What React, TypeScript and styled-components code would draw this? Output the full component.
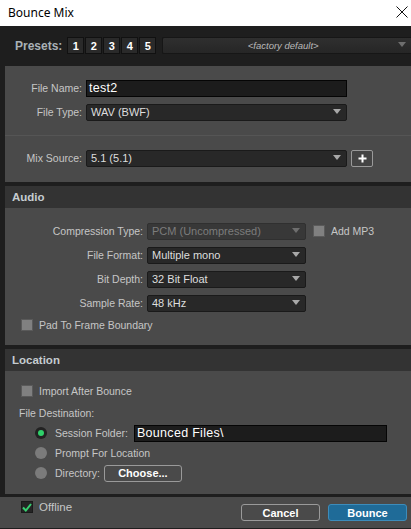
import * as React from "react";
import styled, { createGlobalStyle } from "styled-components";

const GlobalStyle = createGlobalStyle`
  html, body {
    margin: 0;
    padding: 0;
    background: #1e1e1e;
  }
  * {
    box-sizing: border-box;
  }
`;

const Window = styled.div`
  width: 411px;
  height: 529px;
  overflow: hidden;
  display: flex;
  flex-direction: column;
  background: #1e1e1e;
  font-family: "Liberation Sans", Arial, sans-serif;
  font-size: 10.5px;
  color: #c6c6c6;
`;

const TitleBar = styled.div`
  height: 26px;
  flex: none;
  display: flex;
  align-items: center;
  justify-content: space-between;
  padding: 0 2px 2px 8px;
  background: #ffffff;
  color: #000;
  font-family: "Noto Sans", "Open Sans", sans-serif;
  font-size: 12px;
`;

const CloseButton = styled.div`
  width: 14px;
  height: 14px;
  display: flex;
  align-items: center;
  justify-content: center;
`;

const Body = styled.div`
  flex: none;
  display: flex;
  flex-direction: column;
  padding-left: 5px;
`;

const PresetBar = styled.div`
  height: 40px;
  flex: none;
  display: flex;
  align-items: center;
  padding: 0 0 1px 10px;
`;

const PresetLabel = styled.span`
  font-size: 12px;
  font-weight: bold;
  color: #a9b1b6;
  margin-right: 5px;
`;

const PresetSlots = styled.div`
  display: flex;
  gap: 1px;
  margin-right: 6px;
`;

const PresetSlot = styled.div`
  width: 17px;
  height: 17px;
  display: flex;
  align-items: center;
  justify-content: center;
  background: #2a2a2a;
  border: 1px solid #111;
  color: #fff;
  font-weight: bold;
  font-size: 11px;
`;

const PresetMenu = styled.div`
  flex: 1;
  height: 17px;
  position: relative;
  display: flex;
  align-items: center;
  justify-content: center;
  background: linear-gradient(#2f2f2f, #262626);
  border: 1px solid #161616;
  border-right: none;
  border-radius: 2px 0 0 2px;
  color: #b9b9b9;
  font-style: italic;
  font-size: 9.5px;
  padding-right: 8px;
`;

const Panel = styled.div`
  background: #4a4a4a;
  display: flex;
  flex-direction: column;
`;

const FilePanel = styled(Panel)`
  height: 116px;
  flex: none;
`;

const Block = styled.div<{ $pad: string; $gap?: number }>`
  display: flex;
  flex-direction: column;
  gap: ${(p) => p.$gap ?? 0}px;
  padding: ${(p) => p.$pad};
`;

const Divider = styled.div`
  height: 1px;
  background: #333;
  border-bottom: 1px solid #555;
`;

const Row = styled.div<{ $h?: number }>`
  display: flex;
  align-items: center;
  height: ${(p) => p.$h ?? 18}px;
`;

const Label = styled.span<{ $w: number }>`
  width: ${(p) => p.$w}px;
  flex: none;
  text-align: right;
  white-space: nowrap;
  margin-right: 4px;
`;

const TextInput = styled.div<{ $w: number }>`
  width: ${(p) => p.$w}px;
  height: 17px;
  display: flex;
  align-items: center;
  padding-left: 2px;
  background: #1c1c1c;
  border: 1px solid #050505;
  color: #fff;
  font-size: 12.5px;
  letter-spacing: 0.3px;
`;

const Select = styled.div<{ $w: number; $disabled?: boolean }>`
  width: ${(p) => p.$w}px;
  height: 17px;
  position: relative;
  display: flex;
  align-items: center;
  padding-left: 4px;
  background: ${(p) => (p.$disabled ? "#383838" : "#282828")};
  border: 1px solid ${(p) => (p.$disabled ? "#303030" : "#1a1a1a")};
  border-radius: 2px;
  color: ${(p) => (p.$disabled ? "#7c7c7c" : "#dedede")};
  font-size: 11px;
`;

const Arrow = styled.span<{ $dim?: boolean }>`
  position: absolute;
  right: 5px;
  top: 4px;
  width: 0;
  height: 0;
  border-left: 4px solid transparent;
  border-right: 4px solid transparent;
  border-top: 5px solid ${(p) => (p.$dim ? "#6e6e6e" : "#a8a8a8")};
`;

const PlusButton = styled.div`
  width: 22px;
  height: 17px;
  margin-left: 4px;
  display: flex;
  align-items: center;
  justify-content: center;
  border: 1px solid #9a9a9a;
  border-radius: 2px;
  background: #444;
`;

const Section = styled.div<{ $h: number }>`
  flex: none;
  height: ${(p) => p.$h}px;
  margin-top: 4px;
  display: flex;
  flex-direction: column;
`;

const SectionHeader = styled.div`
  height: 22px;
  flex: none;
  display: flex;
  align-items: center;
  padding-left: 7px;
  background: #333333;
  color: #c5ccd0;
  font-weight: bold;
  font-size: 11.5px;
`;

const SectionBody = styled(Panel)`
  flex: 1;
`;

const Check = styled.span<{ $on?: boolean }>`
  width: 12px;
  height: 12px;
  flex: none;
  display: flex;
  align-items: center;
  justify-content: center;
  background: ${(p) => (p.$on ? "#242424" : "#808080")};
  border: 1px solid ${(p) => (p.$on ? "#1a1a1a" : "#5a5a5a")};
  margin-right: 6px;
`;

const Radio = styled.span<{ $on?: boolean }>`
  width: 12px;
  height: 12px;
  flex: none;
  border-radius: 50%;
  display: flex;
  align-items: center;
  justify-content: center;
  background: ${(p) => (p.$on ? "#222" : "#7b7b7b")};
  margin-right: 8px;

  &::after {
    content: "";
    display: ${(p) => (p.$on ? "block" : "none")};
    width: 6px;
    height: 6px;
    border-radius: 50%;
    background: #2fd06a;
  }
`;

const Indent = styled.div<{ $left: number }>`
  display: flex;
  flex-direction: column;
  padding-left: ${(p) => p.$left}px;
`;

const GhostButton = styled.div<{ $w: number; $primary?: boolean }>`
  width: ${(p) => p.$w}px;
  height: 17px;
  display: flex;
  align-items: center;
  justify-content: center;
  border: 1px solid ${(p) => (p.$primary ? "#3c8cbb" : "#9a9a9a")};
  border-radius: 3px;
  background: ${(p) => (p.$primary ? "#1f6b98" : "#4a4a4a")};
  color: #fff;
  font-weight: bold;
  font-size: 11px;
`;

const Footer = styled.div`
  height: 31px;
  flex: none;
  margin-top: 3px;
  display: flex;
  align-items: flex-start;
  padding: 0 4px 0 21px;
  background: #4a4a4a;
`;

const FooterButtons = styled.div`
  margin-left: auto;
  display: flex;
  gap: 8px;
  padding-top: 7px;
`;

const OfflineRow = styled.div`
  display: flex;
  align-items: center;
  padding-top: 4px;
`;

function Dropdown({ w, value, disabled }: { w: number; value: string; disabled?: boolean }) {
  return (
    <Select $w={w} $disabled={disabled}>
      {value}
      <Arrow $dim={disabled} />
    </Select>
  );
}

export default function App() {
  return (
    <Window>
      <GlobalStyle />
      <TitleBar>
        <span>Bounce Mix</span>
        <CloseButton>
          <svg width="12" height="12" viewBox="0 0 12 12">
            <path d="M0.5 0.5 L11.5 11.5 M11.5 0.5 L0.5 11.5" stroke="#111" strokeWidth="1" />
          </svg>
        </CloseButton>
      </TitleBar>

      <Body>
        <PresetBar>
          <PresetLabel>Presets:</PresetLabel>
          <PresetSlots>
            {[1, 2, 3, 4, 5].map((n) => (
              <PresetSlot key={n}>{n}</PresetSlot>
            ))}
          </PresetSlots>
          <PresetMenu>
            &lt;factory default&gt;
            <Arrow $dim />
          </PresetMenu>
        </PresetBar>

        <FilePanel>
          <Block $pad="13px 0 14px 0" $gap={6}>
            <Row>
              <Label $w={77}>File Name:</Label>
              <TextInput $w={261}>test2</TextInput>
            </Row>
            <Row>
              <Label $w={77}>File Type:</Label>
              <Dropdown w={261} value="WAV (BWF)" />
            </Row>
          </Block>
          <Divider />
          <Block $pad="13px 0 0 0">
            <Row>
              <Label $w={77}>Mix Source:</Label>
              <Dropdown w={261} value="5.1 (5.1)" />
              <PlusButton>
                <svg width="9" height="9" viewBox="0 0 9 9">
                  <path d="M4.5 0.5 V8.5 M0.5 4.5 H8.5" stroke="#fff" strokeWidth="2" />
                </svg>
              </PlusButton>
            </Row>
          </Block>
        </FilePanel>

        <Section $h={159}>
          <SectionHeader>Audio</SectionHeader>
          <SectionBody>
            <Block $pad="14px 0 0 0" $gap={6}>
              <Row>
                <Label $w={138}>Compression Type:</Label>
                <Dropdown w={159} value="PCM (Uncompressed)" disabled />
                <span style={{ width: 7 }} />
                <Check />
                <span>Add MP3</span>
              </Row>
              <Row>
                <Label $w={138}>File Format:</Label>
                <Dropdown w={159} value="Multiple mono" />
              </Row>
              <Row>
                <Label $w={138}>Bit Depth:</Label>
                <Dropdown w={159} value="32 Bit Float" />
              </Row>
              <Row>
                <Label $w={138}>Sample Rate:</Label>
                <Dropdown w={159} value="48 kHz" />
              </Row>
              <Indent $left={16}>
                <Row $h={14}>
                  <Check />
                  <span>Pad To Frame Boundary</span>
                </Row>
              </Indent>
            </Block>
          </SectionBody>
        </Section>

        <Section $h={145}>
          <SectionHeader>Location</SectionHeader>
          <SectionBody>
            <Block $pad="12px 0 0 16px">
              <Row $h={16}>
                <Check />
                <span>Import After Bounce</span>
              </Row>
              <Row $h={16} style={{ marginTop: 6, marginLeft: -2 }}>
                File Destination:
              </Row>
              <Indent $left={14}>
                <Row style={{ marginTop: 3 }}>
                  <Radio $on />
                  <span style={{ marginRight: 6 }}>Session Folder:</span>
                  <TextInput $w={253}>Bounced Files\</TextInput>
                </Row>
                <Row style={{ marginTop: 2 }}>
                  <Radio />
                  <span>Prompt For Location</span>
                </Row>
                <Row style={{ marginTop: 2 }}>
                  <Radio />
                  <span style={{ marginRight: 4 }}>Directory:</span>
                  <GhostButton $w={78}>Choose...</GhostButton>
                </Row>
              </Indent>
            </Block>
          </SectionBody>
        </Section>
      </Body>

      <Footer>
        <OfflineRow>
          <Check $on>
            <svg width="10" height="9" viewBox="0 0 10 9">
              <path d="M1 4.5 L3.8 7.5 L9 1" stroke="#37d070" strokeWidth="2" fill="none" />
            </svg>
          </Check>
          <span style={{ fontSize: 11.5 }}>Offline</span>
        </OfflineRow>
        <FooterButtons>
          <GhostButton $w={79}>Cancel</GhostButton>
          <GhostButton $w={79} $primary>
            Bounce
          </GhostButton>
        </FooterButtons>
      </Footer>
    </Window>
  );
}
